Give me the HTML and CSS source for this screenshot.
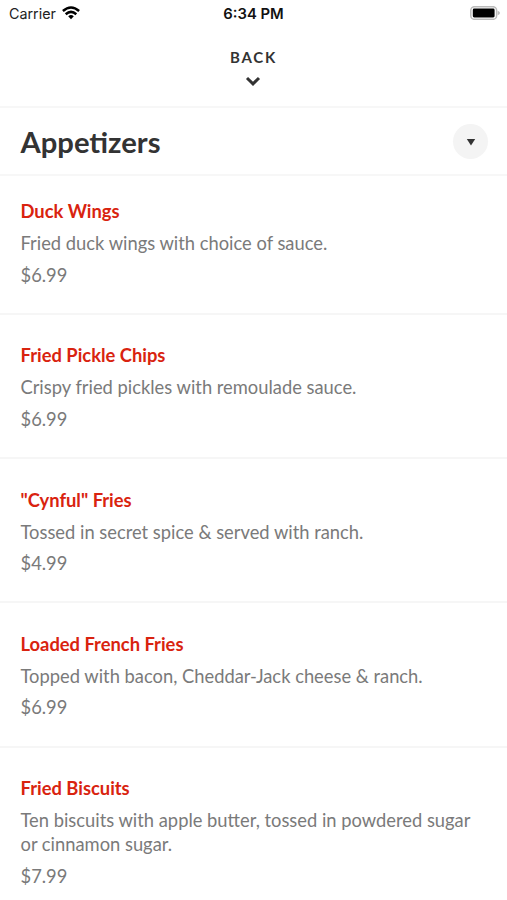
FILE: index.html
```html
<!DOCTYPE html>
<html lang="en">
<head>
<meta charset="utf-8">
<title>Appetizers</title>
<link rel="stylesheet" href="styles.css">
</head>
<body>
<header class="status">
  <div class="carrier"><span>Carrier</span>
    <svg class="wifi" width="18" height="14" viewBox="0 0 18 14"><g fill="none" stroke="#000" stroke-width="2.5"><path d="M.9 5Q9-2 17.1 5"/><path d="M3.7 8.2Q9 3.5 14.3 8.2"/></g><path d="M6.2 10.3Q9 7.9 11.8 10.3L9 13.2Z"/></svg>
  </div>
  <time class="clock">6:34 PM</time>
  <svg class="battery" width="30" height="14" viewBox="0 0 30 14"><rect x=".8" y=".7" width="25.8" height="12.6" rx="3.6" fill="#fff" stroke="#bbb" stroke-width="1.5"/><rect x="2.8" y="2.6" width="21.8" height="8.8" rx="1.4"/><path d="M27.6 4.7Q30 5.5 30 7T27.6 9.3Z" fill="#bbb"/></svg>
</header>
<nav class="back"><span>BACK</span>
  <svg width="16" height="10" viewBox="0 0 16 10"><path d="M2 2l6 5.8L14 2" fill="none" stroke="#333" stroke-width="3"/></svg>
</nav>
<section class="heading"><h1>Appetizers</h1><button class="toggle" aria-label="Choose section"><svg width="10" height="8" viewBox="0 0 10 8"><path d="M.8 1h8.4L5 7.5Z" fill="#333"/></svg></button></section>
<main>
  <article class="item"><h2>Duck Wings</h2><p>Fried duck wings with choice of sauce.</p><p class="price">$6.99</p></article>
  <article class="item"><h2>Fried Pickle Chips</h2><p>Crispy fried pickles with remoulade sauce.</p><p class="price">$6.99</p></article>
  <article class="item"><h2>"Cynful" Fries</h2><p>Tossed in secret spice &amp; served with ranch.</p><p class="price">$4.99</p></article>
  <article class="item"><h2>Loaded French Fries</h2><p>Topped with bacon, Cheddar-Jack cheese &amp; ranch.</p><p class="price">$6.99</p></article>
  <article class="item"><h2>Fried Biscuits</h2><p>Ten biscuits with apple butter, tossed in powdered sugar or cinnamon sugar.</p><p class="price">$7.99</p></article>
</main>
</body>
</html>
```
FILE: styles.css
```css
* { box-sizing: border-box; }
body { margin: 0; height: 900px; overflow: hidden; background: #fff; font-family: Lato, sans-serif; color: #333; }
h1, h2, p { margin: 0; }
svg { display: block; }
.status { height: 28px; padding: 0 7px 0 9px; display: grid; grid-template-columns: 1fr auto 1fr; align-items: center; font: 14.3px Inter, sans-serif; color: #222; }
.carrier { display: flex; align-items: center; gap: 6px; margin-top: -1px; }
.wifi { margin-top: -1px; }
.clock { font-weight: 600; font-size: 14.8px; margin-right: 2px; color: #111; }
.battery { justify-self: end; margin-top: -2px; }
.back { height: 80px; padding-top: 19px; border-bottom: 2px solid #f7f7f7; display: flex; flex-direction: column; align-items: center; font-size: 15px; line-height: 20px; font-weight: 700; letter-spacing: 1.8px; }
.back svg { margin: 9px 1px 0 0; }
.heading { height: 68px; padding: 0 19px 0 20.5px; border-bottom: 2px solid #f7f7f7; display: flex; align-items: center; justify-content: space-between; }
h1 { font-size: 29.2px; line-height: 36px; font-weight: 700; padding-top: 1px; }
.toggle { width: 35px; height: 35px; padding: 0; border: 0; border-radius: 50%; background: #f4f4f4; display: grid; place-items: center; }
.toggle svg { margin-top: 1px; }
.item { height: 144.2px; padding: 28.4px 20.5px 0; border-bottom: 2px solid #f6f6f6; }
.item:first-child { height: 139px; padding-top: 23.4px; }
.item:last-child { height: 153px; border: 0; }
h2 { font-size: 18.35px; line-height: 25px; font-weight: 700; color: #d9230f; }
.item p { margin-top: 7px; font-size: 18.33px; line-height: 24.5px; color: #7a7a7a; }
```
